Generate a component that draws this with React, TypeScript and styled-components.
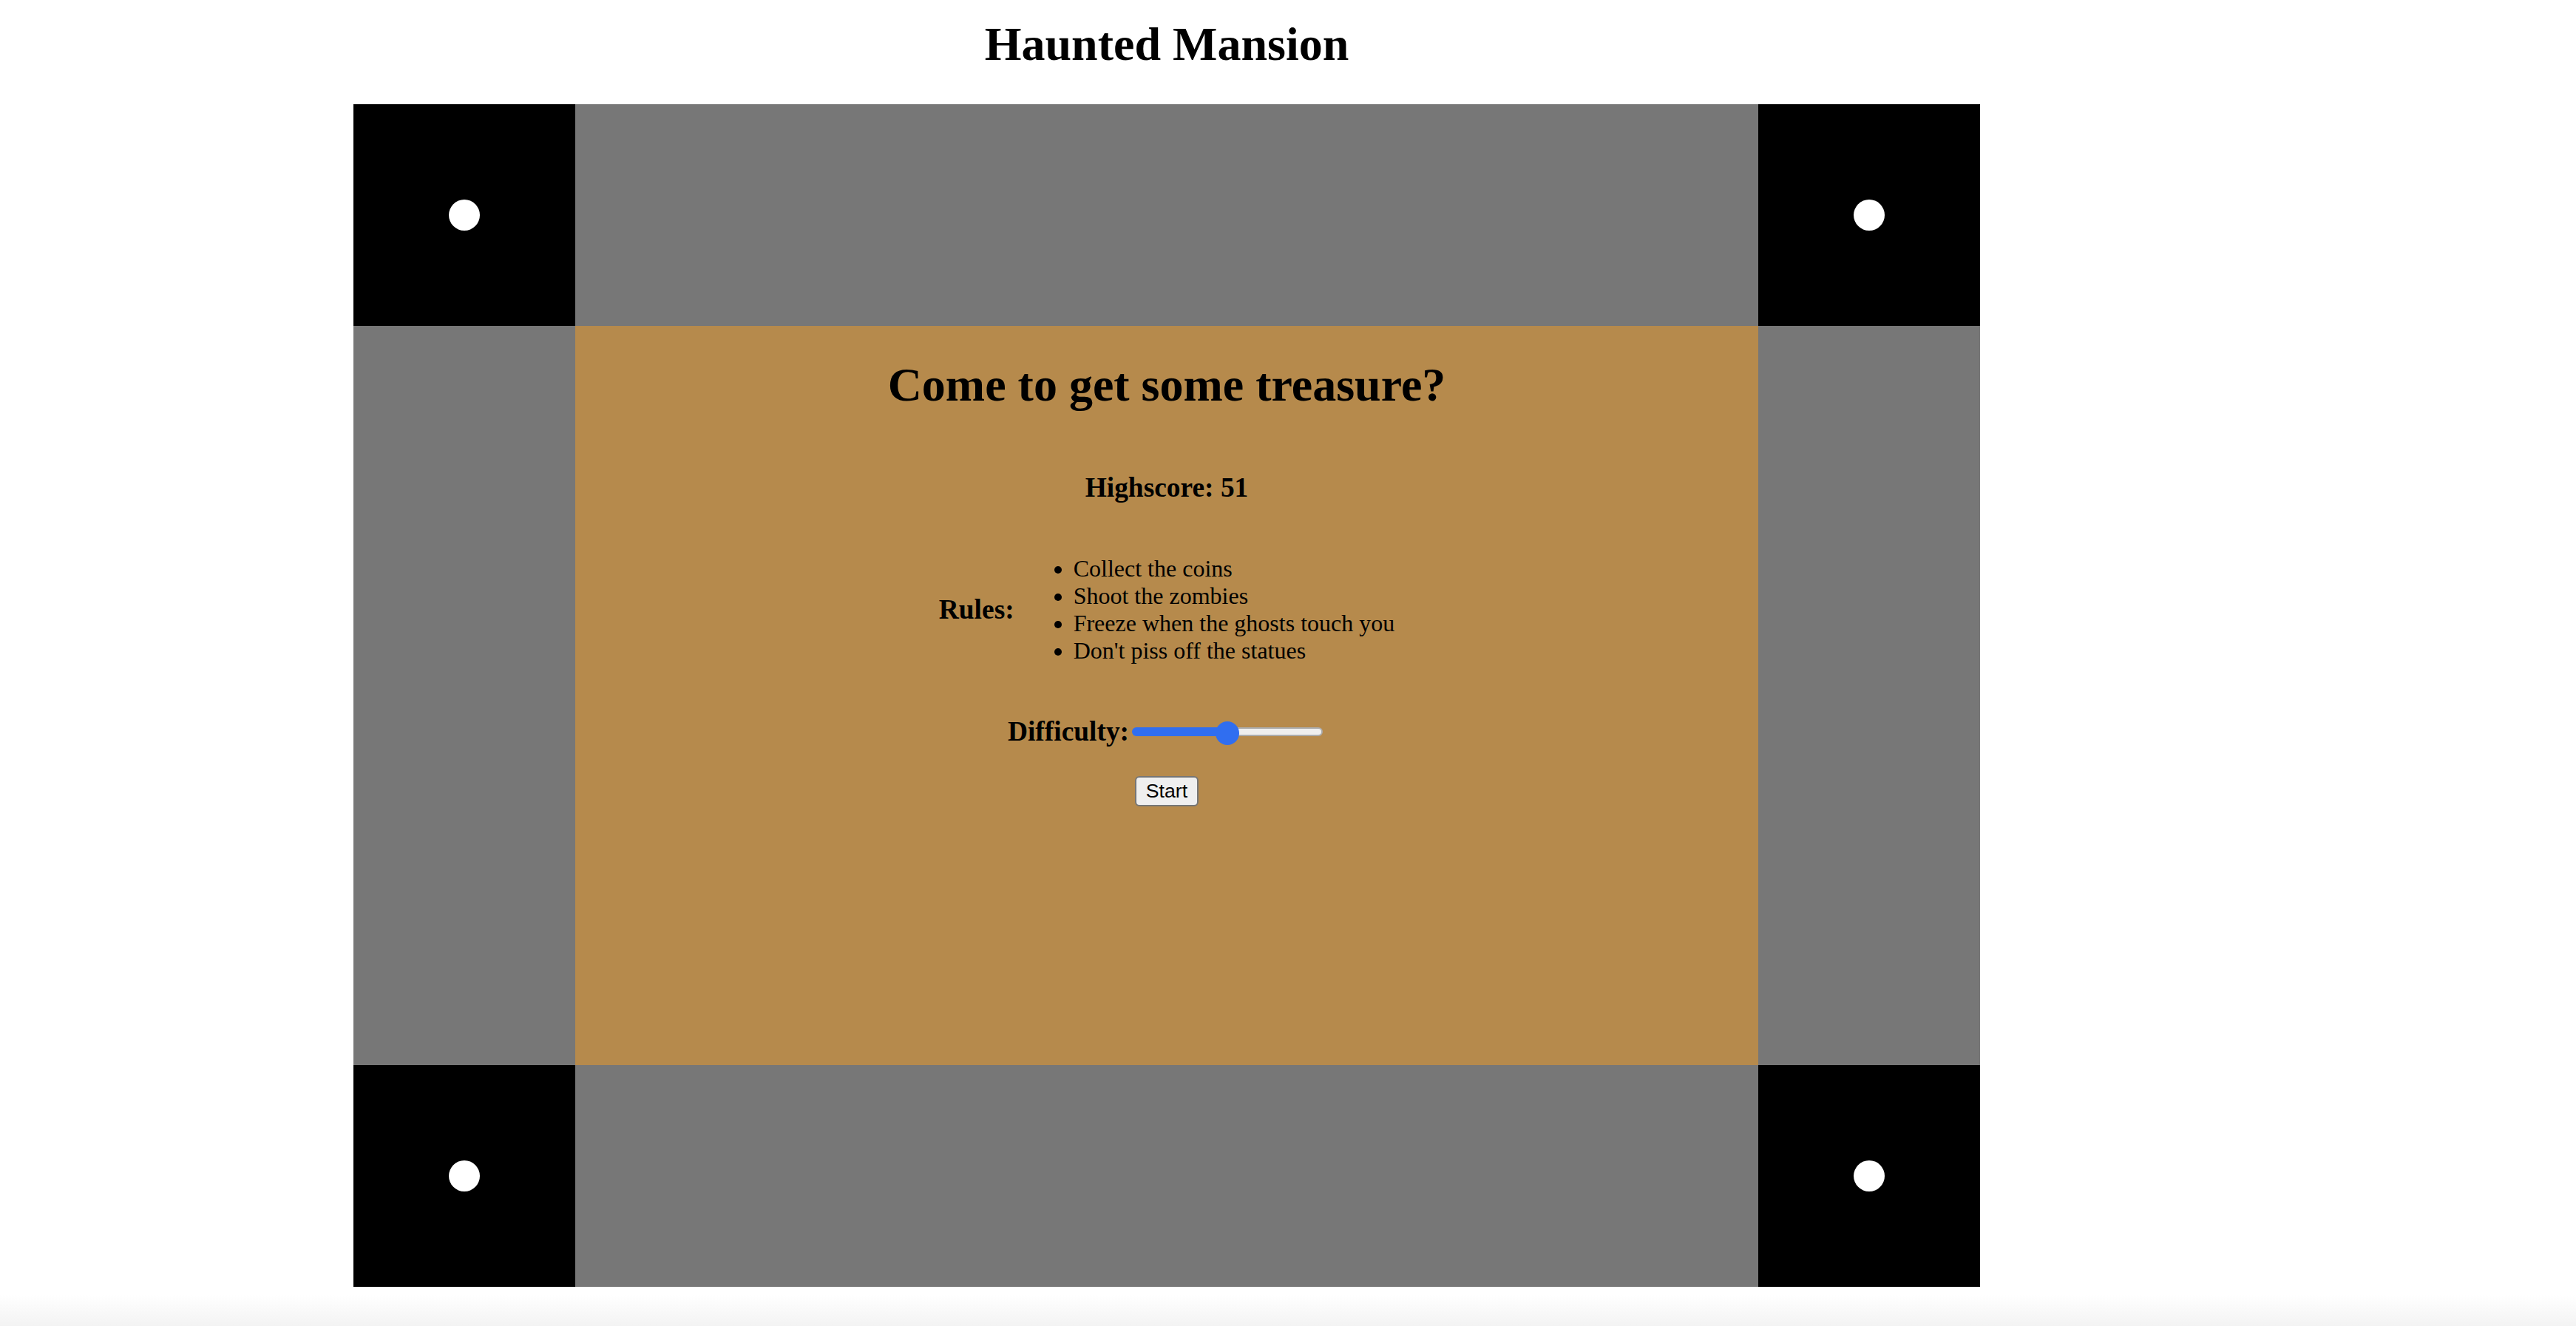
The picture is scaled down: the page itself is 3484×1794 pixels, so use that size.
import { useState } from "react";
import styled, { createGlobalStyle } from "styled-components";

const RULES: string[] = [
  "Collect the coins",
  "Shoot the zombies",
  "Freeze when the ghosts touch you",
  "Don't piss off the statues",
];

const GlobalStyle = createGlobalStyle`
  html, body {
    margin: 0;
    padding: 0;
  }

  body {
    min-height: 100vh;
    font-family: "Liberation Serif", "Times New Roman", serif;
    color: #000;
    background: linear-gradient(180deg, #ffffff calc(100% - 42px), #f3f3f3 100%);
  }
`;

const Page = styled.main`
  display: flex;
  flex-direction: column;
  align-items: center;
  width: 2200px;
  margin-left: 478px;
`;

const Title = styled.h1`
  margin: 23px 0 44px;
  font-size: 64px;
  font-weight: bold;
  line-height: normal;
`;

const Board = styled.div`
  display: grid;
  grid-template-columns: 300px 1600px 300px;
  grid-template-rows: 300px 1000px 300px;
`;

const Corner = styled.div`
  display: flex;
  align-items: center;
  justify-content: center;
  background: #000;
`;

const Light = styled.span`
  width: 42px;
  height: 42px;
  border-radius: 50%;
  background: #fff;
`;

const Hall = styled.div`
  background: #777777;
`;

const Room = styled.section`
  display: flex;
  flex-direction: column;
  align-items: center;
  background: #b68a4c;
`;

const Heading = styled.h1`
  margin: 43px 0;
  font-size: 64px;
  font-weight: bold;
  line-height: normal;
`;

const Label = styled.h3`
  margin: 37.44px 0;
  font-size: 37.44px;
  font-weight: bold;
  line-height: normal;
`;

const Row = styled.div`
  display: flex;
  flex-direction: row;
  align-items: center;
`;

const RuleList = styled.ul`
  margin: 32px 0;
  padding-left: 80px;
  font-size: 32px;
  line-height: normal;
  list-style: disc;
`;

const Slider = styled.input<{ $fill: number }>`
  -webkit-appearance: none;
  appearance: none;
  width: 258px;
  height: 32px;
  margin: 0 4px;
  padding: 0;
  background: transparent;

  &::-webkit-slider-runnable-track {
    height: 12px;
    border: 2px solid transparent;
    border-radius: 8px;
    background:
      linear-gradient(to right, #306ef0 ${(p) => p.$fill}%, transparent ${(p) => p.$fill}%) border-box,
      linear-gradient(#efefef, #efefef) padding-box,
      linear-gradient(to right, #306ef0 ${(p) => p.$fill}%, #acacac ${(p) => p.$fill}%) border-box;
  }

  &::-webkit-slider-thumb {
    -webkit-appearance: none;
    appearance: none;
    width: 32px;
    height: 32px;
    margin-top: -10px;
    border: none;
    border-radius: 50%;
    background: #306ef0;
  }
`;

const StartButton = styled.button`
  margin-top: 1px;
  padding: 3px 13px;
  font-family: "Liberation Sans", Arial, sans-serif;
  font-size: 26.67px;
  line-height: normal;
  color: #000;
  background: #efefef;
  border: 2px solid #767676;
  border-radius: 6px;
`;

const CornerCell = () => (
  <Corner>
    <Light />
  </Corner>
);

const App = () => {
  const [difficulty, setDifficulty] = useState(50);

  return (
    <>
      <GlobalStyle />
      <Page>
        <Title>Haunted Mansion</Title>
        <Board>
          <CornerCell />
          <Hall />
          <CornerCell />
          <Hall />
          <Room>
            <Heading>Come to get some treasure?</Heading>
            <Label>Highscore: 51</Label>
            <Row>
              <Label>Rules:</Label>
              <RuleList>
                {RULES.map((rule) => (
                  <li key={rule}>{rule}</li>
                ))}
              </RuleList>
            </Row>
            <Row>
              <Label>Difficulty:</Label>
              <Slider
                type="range"
                min={0}
                max={100}
                value={difficulty}
                $fill={difficulty}
                onChange={(e) => setDifficulty(Number(e.target.value))}
              />
            </Row>
            <StartButton>Start</StartButton>
          </Room>
          <Hall />
          <CornerCell />
          <Hall />
          <CornerCell />
        </Board>
      </Page>
    </>
  );
};

export default App;
